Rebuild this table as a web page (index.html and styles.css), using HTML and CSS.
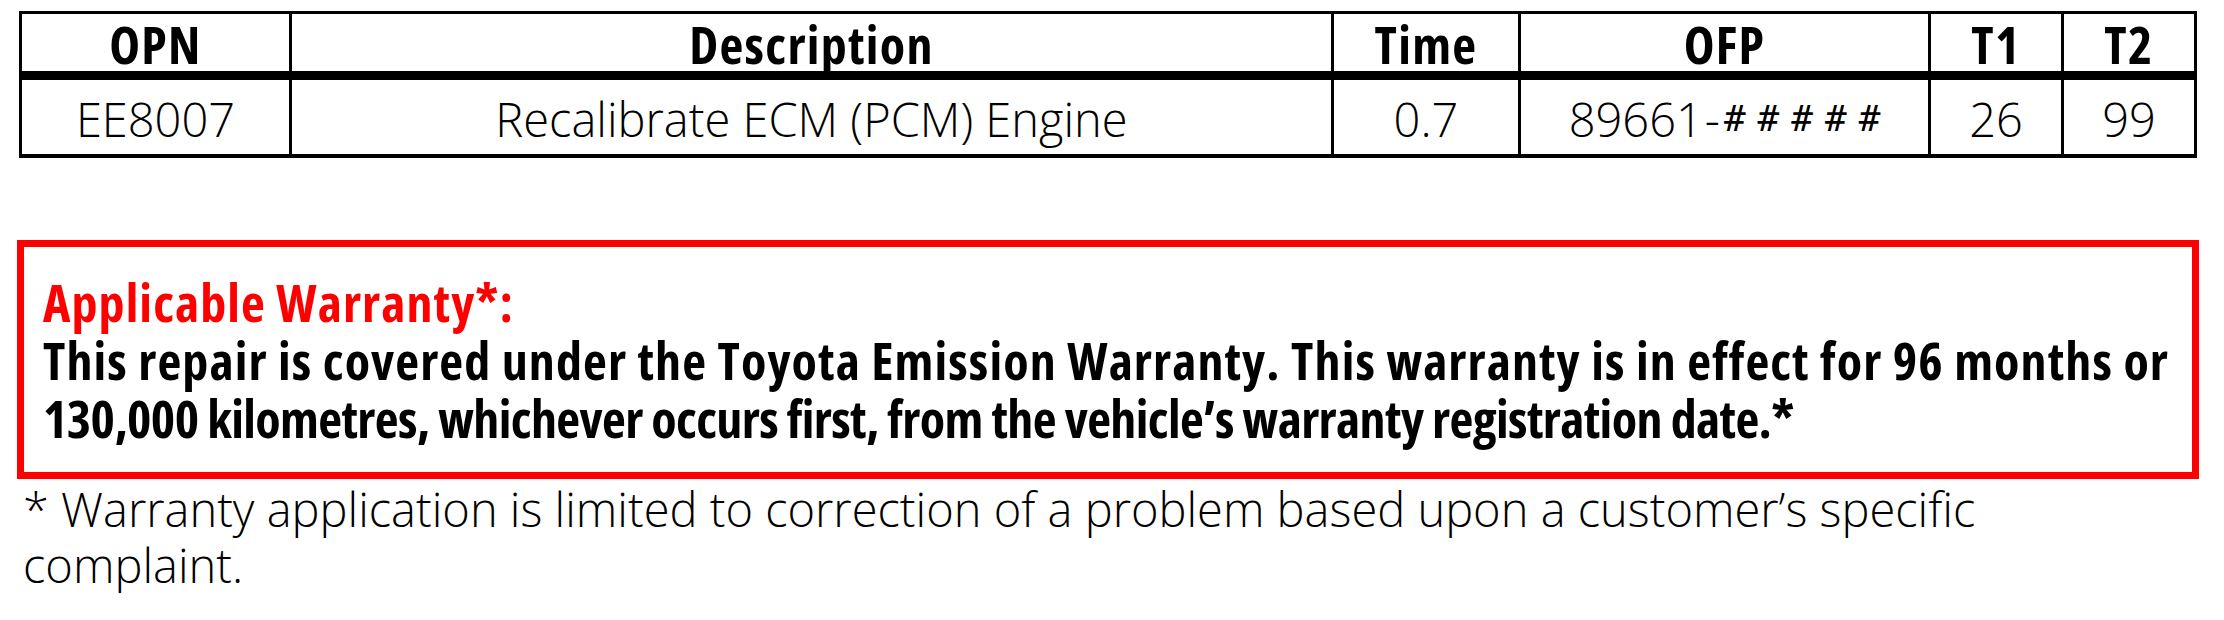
FILE: index.html
```html
<!DOCTYPE html>
<html lang="en">
<head>
<meta charset="utf-8">
<title>Warranty</title>
<link rel="stylesheet" href="styles.css">
</head>
<body>
<div class="ops">
  <div class="cell head">OPN</div>
  <div class="cell head">Description</div>
  <div class="cell head">Time</div>
  <div class="cell head">OFP</div>
  <div class="cell head">T1</div>
  <div class="cell head">T2</div>
  <div class="cell">EE8007</div>
  <div class="cell">Recalibrate ECM (PCM) Engine</div>
  <div class="cell">0.7</div>
  <div class="cell">89661<span class="dash">-</span><span class="hash">#####</span></div>
  <div class="cell">26</div>
  <div class="cell">99</div>
</div>
<div class="warranty">
  <p class="w-title">Applicable Warranty*:</p>
  <p class="w-text"><span class="w-line w-line-a">This repair is covered under the Toyota Emission Warranty. This warranty is in effect for 96 months or</span><span class="w-line w-line-b">130,000 kilometres, whichever occurs first, from the vehicle’s warranty registration date.*</span></p>
</div>
<p class="note">* Warranty application is limited to correction of a problem based upon a customer’s specific<br>complaint.</p>
</body>
</html>
```
FILE: styles.css
```css
html, body {
  margin: 0;
  padding: 0;
  background: #fff;
}
body {
  padding: 11px 0 0 0;
  font-family: "Open Sans", "Noto Sans", sans-serif;
  color: #000;
}
.ops {
  margin-left: 19px;
  width: 2178px;
  box-sizing: border-box;
  display: grid;
  grid-template-columns: 267px 1039px 184px 407px 130px 130px;
  grid-template-rows: 57px 74px;
  column-gap: 3px;
  row-gap: 9px;
  background: #000;
  border: 3px solid #000;
  border-bottom-width: 4px;
}
.cell {
  background: #fff;
  text-align: center;
  white-space: nowrap;
  font-weight: 300;
  font-size: 47px;
  line-height: 74px;
  padding-top: 2px;
  box-sizing: border-box;
}
.cell.head {
  font-weight: 700;
  font-stretch: 75%;
  font-size: 52px;
  letter-spacing: 1.3px;
  line-height: 57px;
  padding-top: 1px;
}
.dash {
  margin: 0 4px 0 2px;
}
.hash {
  font-family: "DejaVu Sans Mono", monospace;
  font-size: 36px;
  letter-spacing: 12px;
  margin-right: -12px;
  vertical-align: 6px;
}
.warranty {
  margin: 82px 0 0 17px;
  width: 2182px;
  box-sizing: border-box;
  border: 7px solid #ff0000;
  padding: 26px 10px 25px 19px;
}
.warranty p {
  margin: 0;
  font-weight: 700;
  font-stretch: 75%;
  font-size: 52px;
  line-height: 58px;
  letter-spacing: 1.1px;
  white-space: nowrap;
}
.w-title {
  color: #ff0000;
}
.w-line {
  display: block;
}
.w-line-b {
  letter-spacing: -0.6px;
}
.note {
  margin: 2px 0 0 23px;
  font-weight: 300;
  font-size: 47px;
  line-height: 56px;
  white-space: nowrap;
}
```
